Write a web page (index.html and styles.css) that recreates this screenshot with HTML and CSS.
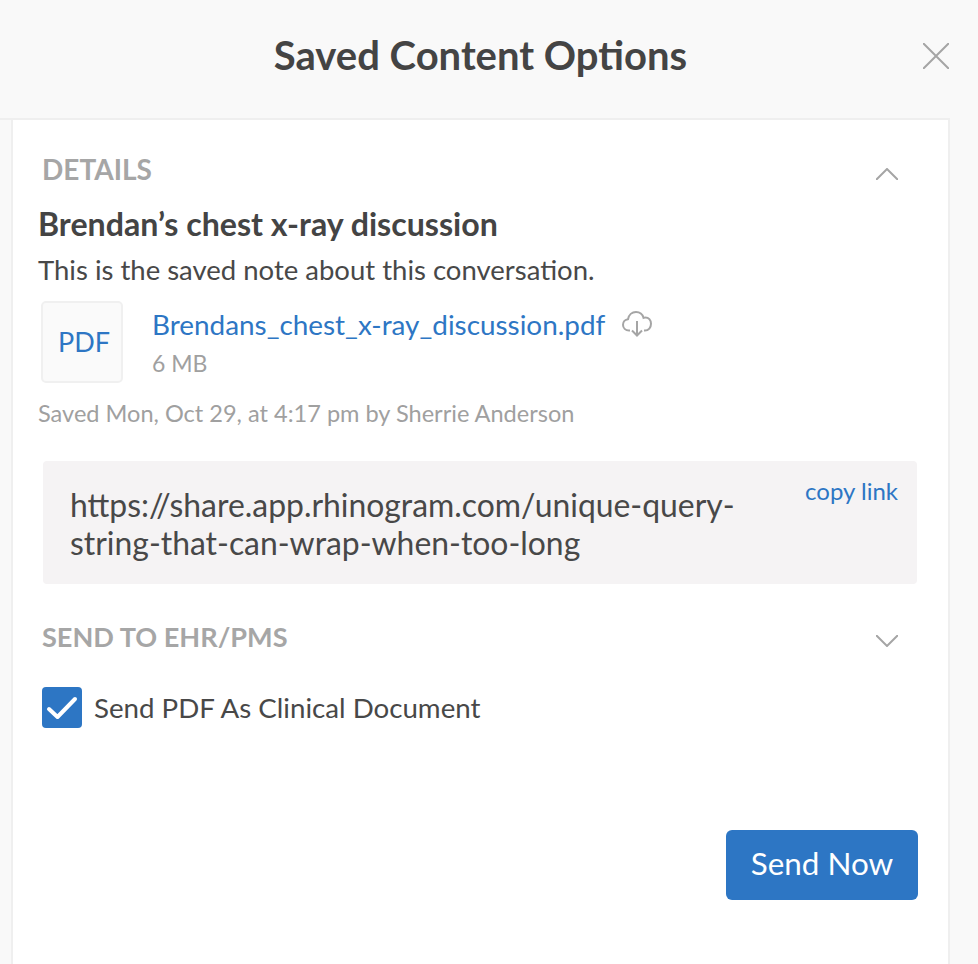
FILE: index.html
```html
<!DOCTYPE html>
<html lang="en">
<head>
	<meta charset="UTF-8">
	<title>Saved Content Options</title>
	<link rel="stylesheet" href="styles.css">
</head>
<body>
	<div class="header">
		<h1 class="title">Saved Content Options</h1>
		<svg class="close" width="26" height="26" viewBox="0 0 26 26"><path d="M0 0L26 26M26 0L0 26"/></svg>
	</div>
	<div class="card">
		<div class="sectionHead detailsHead">
			<span class="sectionTitle detailsTitle">DETAILS</span>
			<svg class="chevron" width="22" height="12" viewBox="0 0 22 12"><path d="M0 12L11 1L22 12"/></svg>
		</div>
		<h2 class="noteTitle">Brendan’s chest x-ray discussion</h2>
		<p class="noteText">This is the saved note about this conversation.</p>
		<div class="file">
			<div class="fileIcon">PDF</div>
			<div class="fileInfo">
				<div class="fileRow">
					<a class="fileName">Brendans_chest_x-ray_discussion.pdf</a>
					<svg class="cloud" width="30" height="26" viewBox="0 0 30 26"><path d="M8 19.500H7C3.500 19.500 1 17 1 13.800C1 10.800 3.200 8.500 6 8.200C6.800 4 10 1 14 1C17.500 1 20.500 3.200 21.500 6.800C22.200 6.500 23 6.400 23.500 6.400C26.500 6.400 29 9 29 12.800C29 16.500 26.500 19.500 23 19.500H22"/><path d="M15 10V24.500M10 19.500L15 24.500L20 19.500"/></svg>
				</div>
				<div class="fileSize">6 MB</div>
			</div>
		</div>
		<p class="saved">Saved Mon, Oct 29, at 4:17 pm by Sherrie Anderson</p>
		<div class="linkBox">
			<span class="linkText">https://share.app.rhinogram.com/unique-query-string-that-can-wrap-when-too-long</span>
			<a class="copyLink">copy link</a>
		</div>
		<div class="sectionHead sendHead">
			<span class="sectionTitle">SEND TO EHR/PMS</span>
			<svg class="chevron" width="22" height="12" viewBox="0 0 22 12"><path d="M0 0L11 11L22 0"/></svg>
		</div>
		<div class="checkRow">
			<span class="checkbox">
				<svg width="40" height="41" viewBox="0 0 40 41"><path d="M7 22L15.500 30L33 12"/></svg>
			</span>
			<span class="checkLabel">Send PDF As Clinical Document</span>
		</div>
		<div class="actions">
			<button class="sendBtn">Send Now</button>
		</div>
	</div>
</body>
</html>
```

FILE: styles.css
```css
*{
	margin: 0;
	padding: 0;
	box-sizing: border-box;
}
html,body{
	height: 964px;
	overflow: hidden;
}
body{
	background: #f9f9f9;
	font-family: "Lato", sans-serif;
	color: #484848;
}
.header{
	width: 950px;
	height: 120px;
	padding-left: 11px;
	position: relative;
	display: flex;
	justify-content: center;
	align-items: center;
	border-bottom: 2px solid #efefef;
}
.title{
	font-size: 40px;
	font-weight: 700;
	color: #444;
	margin-top: -8px;
}
.close{
	position: absolute;
	left: 923px;
	top: 43px;
}
.close path,.chevron path{
	fill: none;
	stroke: #a5a5a5;
	stroke-width: 2;
}
.chevron{
	margin-top: 10px;
}
.card{
	width: 939px;
	height: 846px;
	margin-left: 11px;
	margin-top: -2px;
	background: #fff;
	border: 2px solid #efefef;
	border-bottom: 0;
	padding: 0 30px 0 25px;
	position: relative;
}
.sectionHead{
	display: flex;
	justify-content: space-between;
	align-items: center;
	padding: 0 20px 0 4px;
}
.detailsHead{
	margin-top: 31px;
	height: 36px;
}
.sectionTitle{
	font-size: 27.1px;
	font-weight: 700;
	color: #a6a6a6;
}
.detailsTitle{
	font-size: 28px;
}
.noteTitle{
	font-size: 32.15px;
	font-weight: 700;
	color: #444;
	line-height: 38px;
	margin-top: 18px;
}
.noteText{
	font-size: 27.5px;
	line-height: 34px;
	margin-top: 10px;
}
.file{
	display: flex;
	margin: 14px 0 0 3px;
}
.fileIcon{
	width: 82px;
	height: 82px;
	border: 2px solid #f0f0f0;
	border-radius: 5px;
	background: #fafafa;
	color: #2d76c4;
	font-size: 27px;
	padding: 0 0 2px 4px;
	display: flex;
	align-items: center;
	justify-content: center;
}
.fileInfo{
	margin-left: 29px;
}
.fileRow{
	display: flex;
	align-items: center;
	height: 46px;
}
.fileName{
	font-size: 27.88px;
	color: #2d76c4;
}
.cloud{
	margin-left: 17px;
}
.cloud path{
	fill: none;
	stroke: #a5a5a5;
	stroke-width: 2;
}
.fileSize{
	font-size: 23px;
	color: #a0a0a0;
	margin-top: 2px;
}
.saved{
	font-size: 23.55px;
	color: #a0a0a0;
	margin-top: 15px;
	line-height: 30px;
}
.linkBox{
	margin: 33px 1px 0 5px;
	height: 123px;
	background: #f5f3f4;
	border-radius: 4px;
	position: relative;
	padding: 25px 170px 0 27px;
}
.linkText{
	font-size: 31.9px;
	line-height: 38px;
	display: block;
}
.copyLink{
	position: absolute;
	right: 19px;
	top: 15px;
	font-size: 24px;
	color: #2d76c4;
}
.sendHead{
	margin-top: 34px;
	height: 36px;
}
.checkRow{
	display: flex;
	align-items: center;
	margin: 33px 0 0 4px;
}
.checkbox{
	width: 40px;
	height: 41px;
	background: #2d76c4;
	border-radius: 4px;
	display: block;
}
.checkbox svg{
	display: block;
}
.checkbox path{
	fill: none;
	stroke: #fff;
	stroke-width: 4;
	stroke-linecap: round;
	stroke-linejoin: round;
}
.checkLabel{
	font-size: 27.7px;
	margin-left: 12px;
}
.actions{
	display: flex;
	justify-content: flex-end;
	margin-top: 102px;
}
.sendBtn{
	width: 192px;
	height: 70px;
	padding-bottom: 5px;
	background: #2d76c4;
	color: #fff;
	border: 0;
	border-radius: 6px;
	font-family: "Lato", sans-serif;
	font-size: 31.4px;
}
```
